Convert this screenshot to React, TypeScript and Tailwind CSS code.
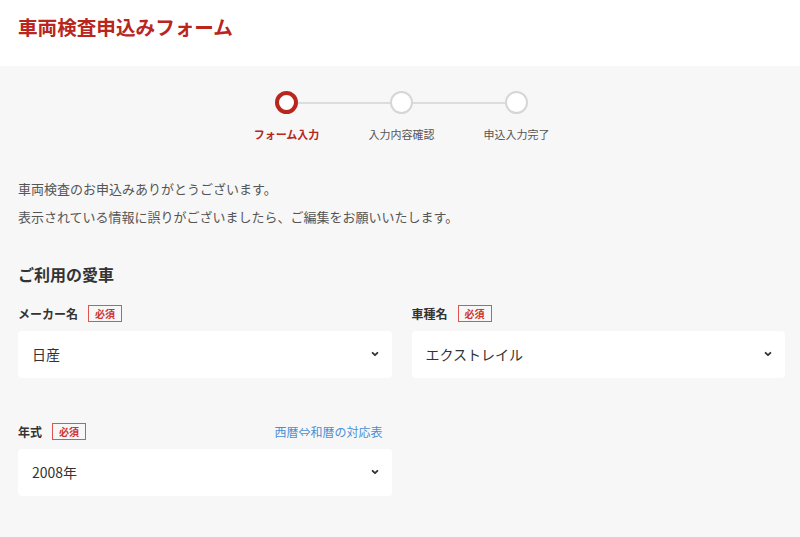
const font = { fontFamily: '"Noto Sans CJK JP", "Noto Sans", sans-serif' };

function Chevron() {
  return (
    <svg width="10" height="10" viewBox="0 0 10 10" fill="none">
      <path d="M2.6 3.8 L5 6.2 L7.4 3.8" stroke="#333" strokeWidth="1.8" strokeLinecap="round" strokeLinejoin="round" />
    </svg>
  );
}

function Required() {
  return (
    <span className="inline-flex h-[17px] items-center border border-[#e0544c] px-[6px] text-[10px] font-bold leading-none text-[#d0342c]">
      必須
    </span>
  );
}

function Select({ value }: { value: string }) {
  return (
    <div className="flex h-[47px] items-center justify-between rounded-[4px] bg-white pl-[14px] pr-[12px]">
      <span className="text-[14px] text-[#333]">{value}</span>
      <Chevron />
    </div>
  );
}

function Field({ label, value, link }: { label: string; value: string; link?: string }) {
  return (
    <div className="flex flex-col">
      <div className="mb-[8px] flex h-[18px] items-center justify-between">
        <div className="flex items-center gap-[10px]">
          <span className="text-[12px] font-bold text-[#333]">{label}</span>
          <Required />
        </div>
        {link && <span className="pr-[9px] text-[12px] text-[#4a8fd4]">{link}</span>}
      </div>
      <Select value={value} />
    </div>
  );
}

const steps = ['フォーム入力', '入力内容確認', '申込入力完了'];

export default function App() {
  return (
    <div className="min-h-screen bg-[#f7f7f7]" style={font}>
      <header className="flex h-[66px] items-start bg-white px-[18px] pt-[12px]">
        <h1 className="text-[19.6px] font-bold text-[#b8261e]">車両検査申込みフォーム</h1>
      </header>

      <main className="pl-[18px] pr-[15px]">
        <div className="flex justify-center pt-[25px]">
          <div className="flex flex-col items-center">
            <div className="flex items-center">
              {steps.map((s, i) => (
                <div key={s} className="flex items-center">
                  {i > 0 && <div className="h-[2px] w-[92px] bg-[#dcdcdc]" />}
                  {i === 0 ? (
                    <div className="h-[23px] w-[23px] rounded-full border-[4px] border-[#b8261e] bg-white" />
                  ) : (
                    <div className="h-[23px] w-[23px] rounded-full border-[2px] border-[#d6d6d6] bg-white" />
                  )}
                </div>
              ))}
            </div>
            <div className="mt-[12px] flex">
              {steps.map((s, i) => (
                <div key={s} className="flex w-[115px] justify-center">
                  <span className={i === 0 ? 'text-[11px] font-bold text-[#b8261e]' : 'text-[11px] text-[#555]'}>{s}</span>
                </div>
              ))}
            </div>
          </div>
        </div>

        <div className="mt-[37px] flex flex-col gap-[10px] text-[13px] text-[#555]">
          <p className="leading-[18px]">車両検査のお申込みありがとうございます。</p>
          <p className="leading-[18px]">表示されている情報に誤りがございましたら、ご編集をお願いいたします。</p>
        </div>

        <h2 className="mt-[36px] text-[16px] font-bold text-[#333]">ご利用の愛車</h2>

        <div className="mt-[19px] grid grid-cols-2 gap-x-[20px] gap-y-[45px]">
          <Field label="メーカー名" value="日産" />
          <Field label="車種名" value="エクストレイル" />
          <Field label="年式" value="2008年" link="西暦⇔和暦の対応表" />
        </div>
      </main>
    </div>
  );
}
